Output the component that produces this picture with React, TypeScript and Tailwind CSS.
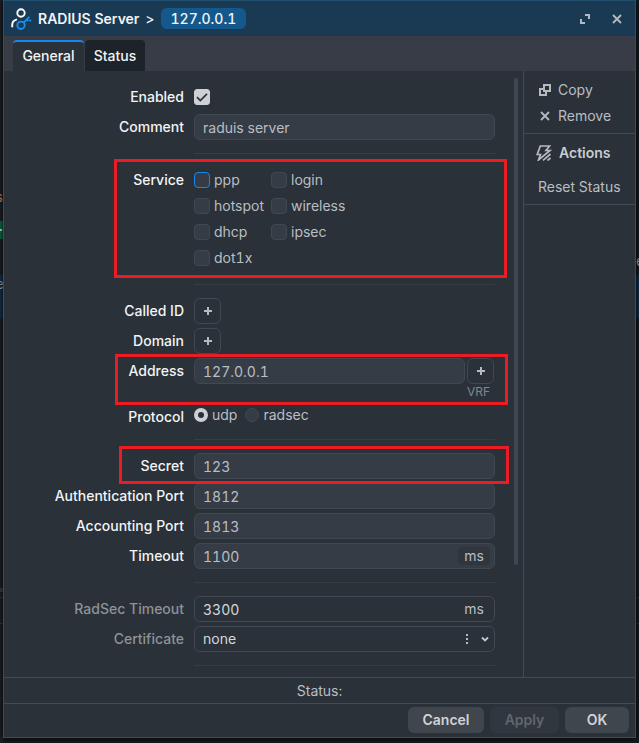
import React, { useState } from 'react';
import clsx from 'clsx';

const services = ['ppp', 'login', 'hotspot', 'wireless', 'dhcp', 'ipsec', 'dot1x'];

const fieldClass =
  'block w-full h-[26px] rounded-md border border-[#404852] px-2 text-[14px] focus:outline-none focus:border-[#1488ec]';

const ServerIcon = () => (
  <svg width="22" height="22" viewBox="0 0 22 22" fill="none" strokeWidth="1.9" aria-hidden="true">
    <circle cx="10" cy="5" r="3.7" stroke="#fff" />
    <path d="M1.2 19.2v-2.2c0-2.9 1.900-5 4.800-5.700" stroke="#fff" />
    <circle cx="10" cy="17.300" r="3.700" stroke="#1a8df0" />
    <path d="M12.700 14.600l5.600-5.800" stroke="#1a8df0" />
    <path d="M15.800 11.500l1.600 1.600M18.400 11.600l1.600 1.600" stroke="#1a8df0" strokeWidth="1.600" />
  </svg>
);

const CopyIcon = () => (
  <svg width="12" height="12" viewBox="0 0 12 12" fill="none" stroke="#b5bac0" strokeWidth="2" aria-hidden="true">
    <path d="M5 1h6v6H5z" />
    <path d="M4 5H1v6h6V8" />
  </svg>
);

const CrossIcon = () => (
  <svg width="10" height="10" viewBox="0 0 10 10" stroke="#b5bac0" strokeWidth="1.8" aria-hidden="true">
    <path d="M1 1l8 8M9 1L1 9" />
  </svg>
);

const ActionsIcon = () => (
  <svg width="16" height="16" viewBox="0 0 16 16" fill="none" stroke="#b5bac0" strokeWidth="1.7" aria-hidden="true">
    <path d="M4.300 1h9.200L10 5.500h4L2.500 15l2-5.500H1.200z" />
    <path d="M7 15.300l7.500-6.300M11.500 15.500l3-2.500" />
  </svg>
);

const ExpandIcon = () => (
  <svg width="10" height="10" viewBox="0 0 10 10" fill="none" stroke="#b5bac0" strokeWidth="2" aria-hidden="true">
    <path d="M5 1h4v4M1 5v4h4" />
  </svg>
);

const PlusIcon = () => (
  <svg width="10" height="10" viewBox="0 0 10 10" stroke="#b5bac0" strokeWidth="2" aria-hidden="true">
    <path d="M5 1v8M1 5h8" />
  </svg>
);

interface RowProps {
  label: string;
  htmlFor?: string;
  muted?: boolean;
  short?: boolean;
  children: React.ReactNode;
}

const Row: React.FC<RowProps> = ({ label, htmlFor, muted, short, children }) => {
  const labelClass = clsx(
    'w-[180px] shrink-0 text-right font-medium leading-[26px]',
    muted ? 'text-[#8d9399]' : 'text-[#f2f4f5]'
  );

  return (
    <div className={clsx('relative flex items-start gap-[10px]', short && 'h-[22px]')}>
      {htmlFor ? (
        <label htmlFor={htmlFor} className={labelClass}>{label}</label>
      ) : (
        <span className={labelClass}>{label}</span>
      )}
      <div className="min-w-0 flex-1">{children}</div>
    </div>
  );
};

const Divider = () => <div className="ml-[190px] my-[13px] h-px bg-[#363d45]" />;

const AddButton = ({ label }: { label: string }) => (
  <button
    aria-label={label}
    className="flex h-[26px] w-[27px] shrink-0 items-center justify-center rounded-md border border-[#404852]"
  >
    <PlusIcon />
  </button>
);

// What is left visible of the page behind the window
const Backdrop = () => (
  <div className="absolute inset-0 overflow-hidden bg-[#15191e]" aria-hidden="true">
    <div className="absolute left-0 top-0 h-full w-[3px] overflow-hidden bg-[#1c2027]">
      <span className="absolute right-0 top-[187px] text-[#c98d63]">s</span>
      <div className="absolute top-[221px] h-[18px] w-full bg-[#0a6b48]" />
      <div className="absolute top-[229px] h-[2px] w-[2px] bg-[#c9d6d0]" />
      <div className="absolute top-[275px] h-[43px] w-full bg-[#12304a]" />
      <span className="absolute -right-px top-[274px] text-[#a5abb1]">e</span>
      <div className="absolute top-[588px] h-[4px] w-full bg-[#3a4047]" />
      <div className="absolute top-[597px] h-[27px] w-full border-y border-[#343a42]" />
    </div>
    <div className="absolute right-0 top-0 h-full w-[3px] overflow-hidden">
      <span className="absolute left-0 top-[251px] text-[#a5abb1]">e</span>
      <div className="absolute top-[275px] h-[43px] w-full bg-[#0d2c48]" />
      <div className="absolute top-[597px] h-[27px] w-full border-y border-[#2a3037]" />
    </div>
  </div>
);

export default function App() {
  const [enabled, setEnabled] = useState(true);
  const [selected, setSelected] = useState<string[]>([]);
  const [protocol, setProtocol] = useState('udp');

  const toggleService = (name: string) => {
    setSelected(
      selected.includes(name) ? selected.filter((s) => s !== name) : [...selected, name]
    );
  };

  return (
    <div className="relative min-h-screen px-[3px] pb-[5px] font-['Inter',sans-serif] text-[14px] leading-[20px] tabular-nums text-[#b9bec4]">
      <Backdrop />

      <main className="relative border border-[#434a53] border-t-[#24506f] bg-[#2a3138] shadow-[0_0_6px_#000]">
        <header className="flex h-[35px] items-center bg-[#1a3a54] pl-[7px] pr-[13px] text-[#f2f4f5]">
          <ServerIcon />
          <h1 className="ml-[5px] font-semibold">RADIUS Server</h1>
          <span className="mx-[6px]">&gt;</span>
          <span className="rounded-md bg-[#14588c] px-[10px] font-medium leading-[21px]">127.0.0.1</span>
          <button aria-label="Maximize" className="ml-auto"><ExpandIcon /></button>
          <button aria-label="Close" className="ml-[22px]"><CrossIcon /></button>
        </header>

        <nav className="flex h-[35px] items-end gap-px bg-[#373c46] pl-[9px] font-medium text-[#f2f4f5]">
          <button className="h-[31px] w-[71px] rounded-t border-t-2 border-[#1488ec] bg-[#2a3138] pb-[2px]">General</button>
          <button className="h-[31px] w-[60px] rounded-t bg-[#1c2329]">Status</button>
        </nav>

        <div className="flex">
          <form className="relative min-w-0 flex-1 pb-[11px] pr-[28px] pt-[13px]" onSubmit={(e) => e.preventDefault()}>
            <div className="space-y-1">
              <Row label="Enabled" htmlFor="enabled">
                <div className="relative flex h-[26px] w-4 items-center">
                  <input
                    id="enabled"
                    type="checkbox"
                    checked={enabled}
                    onChange={(e) => setEnabled(e.target.checked)}
                    className="size-4 appearance-none rounded-[3px] border border-[#404852] bg-[#363c45] checked:border-[#cdd0d4] checked:bg-[#cdd0d4]"
                  />
                  {enabled && (
                    <svg className="pointer-events-none absolute left-[2px]" width="12" height="12" viewBox="0 0 12 12" fill="none" stroke="#2a3138" strokeWidth="1.7">
                      <path d="M1 6.2l3.3 3.3L11 2.8" />
                    </svg>
                  )}
                </div>
              </Row>
              <Row label="Comment" htmlFor="comment">
                <input id="comment" defaultValue="raduis server" className={clsx(fieldClass, 'bg-[#363c45]')} />
              </Row>
            </div>

            <Divider />

            <div className="relative">
              <Row label="Service">
                <div className="grid grid-cols-[77px_1fr]">
                  {services.map((name) => (
                    <label key={name} className="flex h-[26px] items-center gap-1">
                      <input
                        type="checkbox"
                        checked={selected.includes(name)}
                        onChange={() => toggleService(name)}
                        className={clsx(
                          'size-4 shrink-0 appearance-none rounded-[4px] border bg-[#363c45] checked:bg-[#cdd0d4]',
                          name === 'ppp' ? 'border-[#1488ec]' : 'border-[#404852]'
                        )}
                      />
                      {name}
                    </label>
                  ))}
                </div>
              </Row>
              <div className="pointer-events-none absolute -bottom-[7px] left-[110px] -right-[12px] -top-[8px] border-3 border-[#ed1c24]" />
            </div>

            <Divider />

            <div className="space-y-1">
              <Row label="Called ID"><AddButton label="Add Called ID" /></Row>
              <Row label="Domain"><AddButton label="Add Domain" /></Row>
              <div className="relative">
                <Row label="Address" htmlFor="address">
                  <div className="flex gap-[2px]">
                    <input id="address" defaultValue="127.0.0.1" className={clsx(fieldClass, 'min-w-0 flex-1 bg-[#363c45]')} />
                    <div className="w-[28px]">
                      <AddButton label="Add VRF" />
                      <div className="text-[12px] leading-[16px] text-[#80868d]">VRF</div>
                    </div>
                  </div>
                </Row>
                <div className="pointer-events-none absolute -bottom-[5px] left-[111px] -right-[13px] -top-[4px] z-10 border-3 border-[#ed1c24]" />
              </div>
              <Row label="Protocol" short>
                <div className="flex h-[22px] items-center gap-2">
                  {['udp', 'radsec'].map((name) => (
                    <label key={name} className="flex items-center gap-1">
                      <input
                        type="radio"
                        name="protocol"
                        checked={protocol === name}
                        onChange={() => setProtocol(name)}
                        className="size-[14px] appearance-none rounded-full border border-[#404852] bg-[#363c45] checked:border-4 checked:border-[#cdd0d4] checked:bg-[#2a3138]"
                      />
                      {name}
                    </label>
                  ))}
                </div>
              </Row>
            </div>

            <Divider />

            <div className="space-y-1">
              <div className="relative">
                <Row label="Secret" htmlFor="secret">
                  <input id="secret" defaultValue="123" className={clsx(fieldClass, 'bg-[#363c45]')} />
                </Row>
                <div className="pointer-events-none absolute -bottom-[5px] left-[115px] -right-[14px] -top-[7px] z-10 border-3 border-[#ed1c24]" />
              </div>
              <Row label="Authentication Port" htmlFor="auth-port">
                <input id="auth-port" defaultValue="1812" className={clsx(fieldClass, 'bg-[#363c45]')} />
              </Row>
              <Row label="Accounting Port" htmlFor="acct-port">
                <input id="acct-port" defaultValue="1813" className={clsx(fieldClass, 'bg-[#363c45]')} />
              </Row>
              <Row label="Timeout" htmlFor="timeout">
                <div className="relative">
                  <input id="timeout" defaultValue="1100" className={clsx(fieldClass, 'bg-[#363c45]')} />
                  <span className="absolute right-[5px] top-1 rounded bg-[#30363e] px-[6px] leading-[18px]">ms</span>
                </div>
              </Row>
            </div>

            <Divider />

            <div className="space-y-1">
              <Row label="RadSec Timeout" htmlFor="radsec-timeout" muted>
                <div className="relative">
                  <input id="radsec-timeout" defaultValue="3300" className={clsx(fieldClass, 'text-[#d5d8db]')} />
                  <span className="absolute right-[5px] top-1 px-[6px] leading-[18px]">ms</span>
                </div>
              </Row>
              <Row label="Certificate" htmlFor="certificate" muted>
                <div className="relative">
                  <select id="certificate" className={clsx(fieldClass, 'appearance-none text-[#d5d8db]')}>
                    <option>none</option>
                  </select>
                  <svg className="pointer-events-none absolute right-[6px] top-2" width="25" height="10" viewBox="0 0 25 10" fill="none" aria-hidden="true">
                    <path d="M2 0h2v2H2zM2 4h2v2H2zM2 8h2v2H2z" fill="#b5bac0" />
                    <path d="M18 3.5l3 3 3-3" stroke="#c3c8cd" strokeWidth="1.8" />
                  </svg>
                </div>
              </Row>
            </div>

            <div className="ml-[190px] mt-[13px] h-px bg-[#363d45]" />
            <div className="absolute right-[5px] top-[7px] h-[487px] w-1 rounded-full bg-[#414750]" />
          </form>

          <aside className="w-[112px] shrink-0 border-l border-[#434a53]">
            <div className="border-b border-[#434a53] pb-1 pl-[15px] pt-[6px]">
              <button className="flex h-[26px] items-center gap-[7px]"><CopyIcon />Copy</button>
              <button className="flex h-[26px] items-center gap-[7px]">
                <span className="flex w-3 justify-center"><CrossIcon /></span>
                Remove
              </button>
            </div>
            <div className="border-b border-[#434a53] pb-1 pl-3 pt-[6px]">
              <h2 className="flex h-[26px] items-center gap-[7px] font-semibold text-[#c9cdd1]"><ActionsIcon />Actions</h2>
              <button className="mt-2 h-[26px] whitespace-nowrap px-[2px]">Reset Status</button>
            </div>
          </aside>
        </div>

        <div className="border-y border-[#434a53] text-center leading-[25px]">Status:</div>

        <footer className="flex justify-end gap-[6px] px-[6px] pb-1 pt-[3px] font-semibold">
          <button className="h-[26px] w-[76px] rounded-md bg-[#40464e] text-[#d0d3d6]">Cancel</button>
          <button disabled className="h-[26px] w-[69px] rounded-md bg-[#30373e] text-[#60666d]">Apply</button>
          <button className="h-[26px] w-[64px] rounded-md bg-[#40464e] text-[#d0d3d6]">OK</button>
        </footer>
      </main>
    </div>
  );
}
